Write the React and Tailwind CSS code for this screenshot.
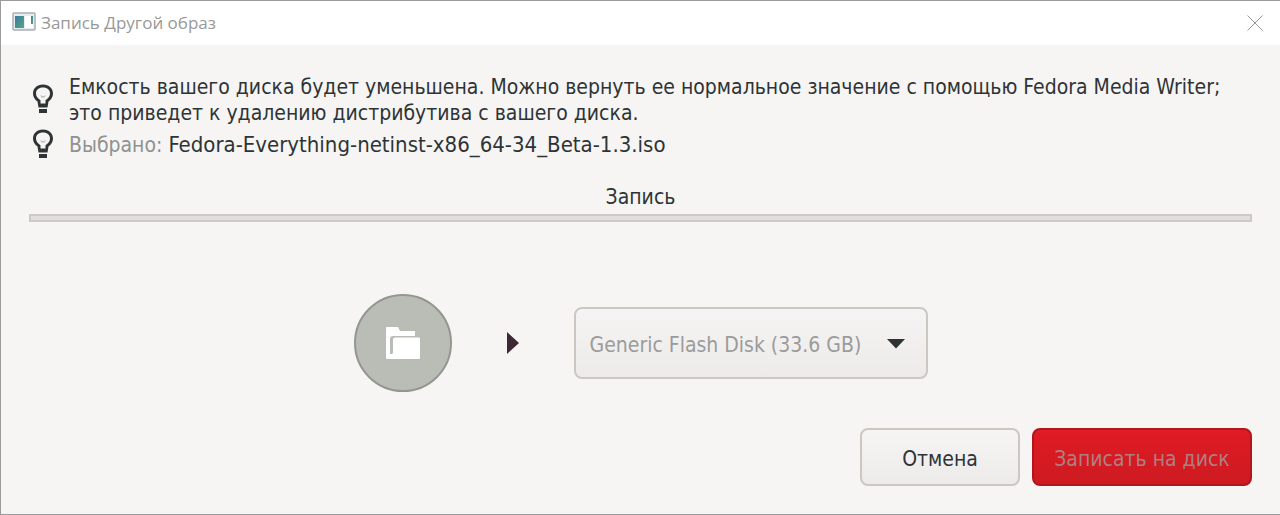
function Bulb() {
  return (
    <svg className="h-8 w-[22px] shrink-0" viewBox="0 0 22 32" aria-hidden="true">
      <path d="M11 .5C4.800 .5 1 4.500 1 9.500C1 13 2.800 15.500 5.500 17.500L6.500 23.500H15.500L16.500 17.500C19.200 15.500 21 13 21 9.500C21 4.500 17.200 .5 11 .5z" fill="#2e3436" />
      <path d="M11 3.500C6.500 3.500 4 6 4 9.500C4 12.500 5.800 14.500 8.500 16.200V19.500H13.500V16.200C16.200 14.500 18 12.500 18 9.500C18 6 15.500 3.500 11 3.500z" fill="#f6f5f4" />
      <path d="M8 11l1.500 2.500h3L14 11l-2 1h-2z" fill="#bdbcbb" />
      <path d="M7 25h8v4H7z" fill="#2e3436" />
    </svg>
  );
}

export default function App() {
  return (
    <main className="flex min-h-screen flex-col border border-r-0 border-[#9b9b9b] bg-[#f6f5f4] font-['DejaVu_Sans_Condensed','Noto_Sans',sans-serif] text-[21px] leading-[26px] text-[#2e3436]">
      <header className="flex h-11 items-center justify-between bg-white pr-[17px] pl-[11px] font-['Open_Sans',sans-serif] text-[17px] text-[#999999]">
        <div className="flex items-center gap-[5px]">
          <svg className="h-[22px] w-6" viewBox="0 0 24 22" aria-hidden="true">
            <defs>
              <linearGradient id="screen" x1="0" y1="0" x2="1" y2="1">
                <stop offset="0" stopColor="#3c79a5" />
                <stop offset="1" stopColor="#55a77c" />
              </linearGradient>
            </defs>
            <rect x="1" y="1" width="22" height="17" rx="1" fill="#e9ecef" stroke="#a9afb4" strokeWidth="1.500" />
            <rect x="3" y="4" width="9" height="12" fill="url(#screen)" />
            <rect x="13" y="4" width="5" height="12" fill="#fff" />
            <rect x="18" y="4" width="3" height="12" fill="#fff" />
            <rect x="19" y="4" width="2" height="8" fill="url(#screen)" />
          </svg>
          <h1>Запись Другой образ</h1>
        </div>
        <button type="button" aria-label="Закрыть">
          <svg className="size-4" viewBox="0 0 16 16" stroke="#999" aria-hidden="true"><path d="M.5 .5l15 15M15.500 .5l-15 15" /></svg>
        </button>
      </header>
      <section className="flex flex-1 flex-col px-7 pt-[29px] pb-7">
        <div className="flex flex-col gap-[3px]">
          <div className="flex items-center gap-[15px] pl-[3px]">
            <Bulb />
            <p>Емкость вашего диска будет уменьшена. Можно вернуть ее нормальное значение с помощью Fedora Media Writer; это приведет к удалению дистрибутива с вашего диска.</p>
          </div>
          <div className="flex items-center gap-[15px] pl-[3px]">
            <Bulb />
            <p><span className="text-[#8f9192]">Выбрано:</span> <span className="text-[22px]">Fedora-Everything-netinst-x86_64-34_Beta-1.3.iso</span></p>
          </div>
        </div>
        <div className="mt-[23px]">
          <p id="stage" className="text-center">Запись</p>
          <div role="progressbar" aria-labelledby="stage" aria-valuenow={0} className="mt-1 h-2 border-2 border-[#cdc9c5] bg-[#e1dedb]" />
        </div>
        <div className="flex items-center justify-center gap-[55px] pt-[72px]">
          <div className="flex size-[98px] items-center justify-center rounded-full border-2 border-[#949791] bg-[#babdb6]">
            <svg className="h-8 w-[34px]" viewBox="0 0 34 32" aria-hidden="true">
              <path d="M0 1Q0 0 1 0H12l2 4h15v5H7Q4 9 4 12V27h2v5H1Q0 32 0 31z" fill="#fff" />
              <path d="M9 10.500H33q1 0 1 1V31q0 1-1 1H6V27l1-1V12.500q0-2 2-2z" fill="#fff" />
            </svg>
          </div>
          <svg className="h-6 w-3" viewBox="0 0 12 24" aria-hidden="true"><path d="M0 1l12 11L0 23z" fill="#3d2833" /></svg>
          <div className="relative flex">
            <select disabled aria-label="Диск" className="h-[72px] w-[354px] appearance-none rounded-lg border-2 border-[#cdc7c2] bg-linear-to-b from-[#f5f4f4] to-[#edebe9] pt-1 pl-[14px] text-[#9a9b9b] opacity-100">
              <option>Generic Flash Disk (33.6 GB)</option>
            </select>
            <svg className="pointer-events-none absolute top-8 right-[23px] h-[10px] w-[18px]" viewBox="0 0 18 10" aria-hidden="true"><path d="M0 0h18L9 9.500z" fill="#2e3436" /></svg>
          </div>
        </div>
        <div className="mt-auto flex justify-end gap-3">
          <button type="button" className="h-[58px] w-40 rounded-lg border-2 border-[#cdc7c2] bg-linear-to-b from-[#f6f5f4] to-[#edebe9] pt-1">Отмена</button>
          <button type="button" disabled className="h-[58px] w-[220px] rounded-lg border-2 border-[#b2161d] bg-linear-to-b from-[#e01b24] to-[#cd1a21] pt-1 text-[#ae7f80]">Записать на диск</button>
        </div>
      </section>
    </main>
  );
}
